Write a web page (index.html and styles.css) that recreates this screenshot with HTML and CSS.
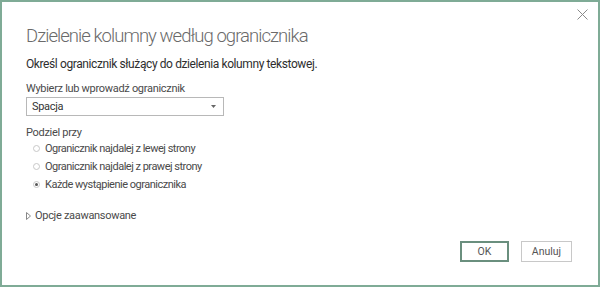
FILE: index.html
```html
<html>
    <head>
        <title>Dzielenie kolumny</title>
        <link rel="stylesheet" href="styles.css">
    </head>
    <body>
        <div class="dialog">
            <button class="close" title="Zamknij">
                <svg width="11" height="11" viewBox="0 0 11 11"><path d="M0.5 0.5 L10.5 10.5 M10.5 0.5 L0.5 10.5" stroke="#8a8a8a" stroke-width="1"/></svg>
            </button>
            <h1>Dzielenie kolumny według ogranicznika</h1>
            <p class="lead">Określ ogranicznik służący do dzielenia kolumny tekstowej.</p>
            <div class="field">
                <label>Wybierz lub wprowadź ogranicznik</label>
                <div class="select">
                    <span>Spacja</span>
                    <svg width="5" height="3" viewBox="0 0 5 3"><path d="M0 0 H5 L2.5 3 Z" fill="#666"/></svg>
                </div>
            </div>
            <div class="field">
                <label>Podziel przy</label>
                <ul class="radios">
                    <li><span class="radio"></span>Ogranicznik najdalej z lewej strony</li>
                    <li><span class="radio"></span>Ogranicznik najdalej z prawej strony</li>
                    <li><span class="radio checked"></span>Każde wystąpienie ogranicznika</li>
                </ul>
            </div>
            <div class="advanced">
                <svg width="5" height="8" viewBox="0 0 5 8"><path d="M0.5 0.5 L4.5 4 L0.5 7.5 Z" fill="none" stroke="#888" stroke-width="1"/></svg>
                Opcje zaawansowane
            </div>
            <div class="buttons">
                <button class="btn primary">OK</button>
                <button class="btn">Anuluj</button>
            </div>
        </div>
    </body>
</html>
```

FILE: styles.css
```css
body {
    margin: 0;
    font-family: Roboto, sans-serif;
    color: #333;
    background: #fff;
}
.dialog {
    position: relative;
    box-sizing: border-box;
    width: 600px;
    height: 287px;
    border: 2px solid #7fab96;
    padding: 22px 26px 0 24px;
    display: flex;
    flex-direction: column;
}
.close {
    position: absolute;
    top: 7px;
    right: 10px;
    border: none;
    background: none;
    padding: 0;
}
h1 {
    margin: 0;
    font-size: 18.5px;
    line-height: 24px;
    font-weight: 300;
    letter-spacing: -0.95px;
    color: #6a6a6a;
}
.lead {
    margin: 8px 0 0;
    font-size: 12px;
    line-height: 16px;
    letter-spacing: -0.4px;
    color: #2e2e2e;
}
.field {
    margin-top: 9px;
}
.field label {
    display: block;
    font-size: 11px;
    letter-spacing: -0.3px;
    color: #4a4a4a;
    line-height: 16px;
}
.select {
    box-sizing: border-box;
    width: 198px;
    height: 19px;
    border: 1px solid #b8b8b8;
    display: flex;
    align-items: center;
    justify-content: space-between;
    padding: 0 7px 0 5px;
    font-size: 11px;
    letter-spacing: -0.3px;
    color: #333;
}
.radios {
    list-style: none;
    margin: -2px 0 0;
    padding: 0 0 0 7px;
}
.radios li {
    display: flex;
    align-items: center;
    font-size: 11px;
    letter-spacing: -0.5px;
    color: #4a4a4a;
    height: 18px;
}
.radio {
    box-sizing: border-box;
    width: 7px;
    height: 7px;
    border: 1px solid #c8c8c8;
    border-radius: 50%;
    margin-right: 5px;
    display: inline-flex;
    align-items: center;
    justify-content: center;
}
.radio.checked::after {
    content: "";
    width: 3px;
    height: 3px;
    border-radius: 50%;
    background: #555;
}
.advanced {
    margin-top: 16px;
    display: flex;
    align-items: center;
    gap: 4px;
    font-size: 11px;
    letter-spacing: -0.3px;
    color: #4a4a4a;
}
.buttons {
    margin-top: auto;
    margin-bottom: 23px;
    display: flex;
    justify-content: flex-end;
    gap: 12px;
}
.btn {
    box-sizing: border-box;
    width: 51px;
    height: 21px;
    background: #fff;
    border: 1px solid #c8c8c8;
    font-family: Roboto, sans-serif;
    font-size: 10.5px;
    color: #555;
    padding: 0;
}
.btn.primary {
    width: 49px;
    border: 2px solid #6a8f7e;
}
```
